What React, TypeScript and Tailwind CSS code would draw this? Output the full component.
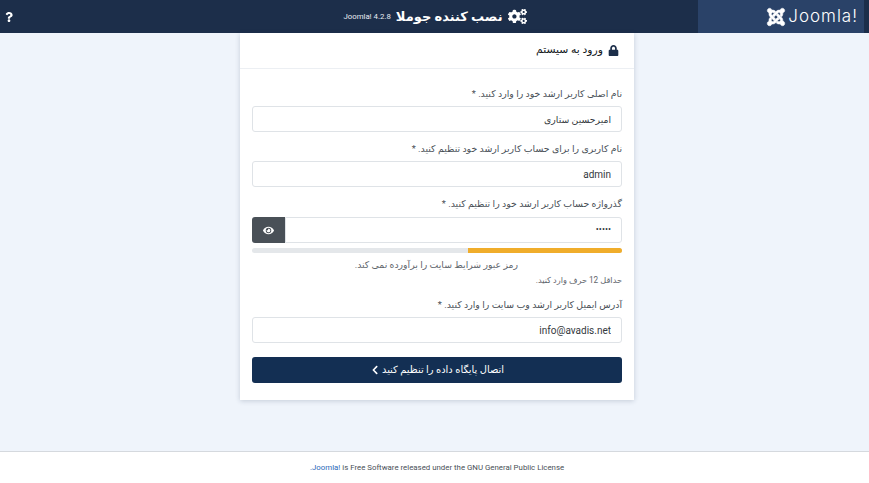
import React from "react";
import { FaLock, FaEye, FaChevronLeft, FaCogs, FaQuestion, FaJoomla } from "react-icons/fa";

const fa = "font-['Roboto','DejaVu_Sans',sans-serif]";

function Field({ label, value, size }: { label: string; value: string; size: string }) {
  return (
    <div className="flex flex-col">
      <label className="h-[29px] pt-[9px] text-[9.4px] leading-[16px] text-[#495057]">{label}</label>
      <input
        readOnly
        value={value}
        dir="rtl"
        className={`h-[26px] w-full rounded-[3px] border border-[#dfe3e7] bg-white px-[10px] text-[#33383d] outline-none ${size} ${fa}`}
      />
    </div>
  );
}

export default function App() {
  return (
    <div dir="rtl" className={`flex h-[483px] w-[869px] flex-col overflow-hidden bg-[#eff4fb] ${fa}`}>
      <header className="flex h-[33px] shrink-0 items-center bg-[#1c2e4a]">
        <div className="mr-[5px] flex h-[33px] w-[166px] shrink-0 items-center justify-end gap-[2px] bg-[#2a4268] pr-[6px]" dir="ltr">
          <FaJoomla className="text-[20px] text-white" stroke="white" strokeWidth={12} />
          <span className="font-['Inter',sans-serif] text-[17px] font-light leading-none tracking-[1px] text-white">Joomla!</span>
        </div>
        <div className="flex flex-1 items-center justify-center gap-[5px] pl-[154px]">
          <FaCogs className="text-[19px] text-white" />
          <span className="text-[13px] font-bold leading-none text-white">نصب کننده جوملا</span>
          <span className="text-[7.8px] text-[#e8ecf2]" dir="ltr">Joomla! 4.2.8</span>
        </div>
        <div className="flex w-[18px] shrink-0 items-center justify-center">
          <FaQuestion className="text-[10px] text-white" />
        </div>
      </header>

      <main className="flex min-h-0 flex-1 justify-center pl-[5px]">
        <div className="flex h-[367px] w-[394px] flex-col bg-white shadow-[0_1px_5px_rgba(30,50,80,0.2)]">
          <div className="flex h-[36px] shrink-0 items-center gap-[5px] border-b border-[#eceff3] px-[15px]">
            <FaLock className="text-[11px] text-[#1c2e4a]" />
            <h2 className="text-[10.8px] font-normal text-[#14181c]">ورود به سیستم</h2>
          </div>
          <div className="flex flex-col px-[12px] pt-[8px]">
            <Field label="نام اصلی کاربر ارشد خود را وارد کنید. *" value="امیرحسین ستاری" size="text-[9.3px]" />
            <Field label="نام کاربری را برای حساب کاربر ارشد خود تنظیم کنید. *" value="admin" size="text-[10px]" />
            <div className="flex flex-col">
              <label className="h-[30px] pt-[9px] text-[9.4px] leading-[16px] text-[#495057]">گذرواژه حساب کاربر ارشد خود را تنظیم کنید. *</label>
              <div className="flex h-[26px]">
                <input
                  readOnly
                  value="12345"
                  type="password"
                  dir="rtl"
                  className="min-w-0 flex-1 rounded-r-[3px] border border-[#dfe3e7] bg-white px-[10px] text-[9px] text-[#33383d] outline-none"
                />
                <button className="flex w-[33px] items-center justify-center rounded-l-[3px] bg-[#495057] text-white">
                  <FaEye className="text-[11px]" />
                </button>
              </div>
            </div>
            <div className="mt-[5px] flex h-[5px] overflow-hidden rounded-full bg-[#e4e7ea]">
              <div className="h-full w-[154px] bg-[#f0ad2b]" />
            </div>
            <p className="mt-[4px] pr-[104px] text-[9.3px] leading-[16px] text-[#5f666d]">رمز عبور شرایط سایت را برآورده نمی کند.</p>
            <p className="text-[8.2px] leading-[14px] text-[#5f666d]">حداقل 12 حرف وارد کنید.</p>
            <div className="mt-[1px]">
              <Field label="آدرس ایمیل کاربر ارشد وب سایت را وارد کنید. *" value="info@avadis.net" size="text-[10px]" />
            </div>
            <button className="mt-[14px] flex h-[26px] items-center justify-center gap-[2px] rounded-[3px] bg-[#132f53] text-[9.9px] font-medium text-white">
              <span>اتصال پایگاه داده را تنظیم کنید</span>
              <FaChevronLeft className="text-[10px]" />
            </button>
          </div>
        </div>
      </main>

      <footer className="flex h-[32px] shrink-0 items-center justify-center border-t border-[#d5d9de] bg-white pl-[5px] text-[7.85px] text-[#495057]" dir="ltr">
        <span>
          <a className="text-[#2a69b8]">.Joomla!</a> is Free Software released under the GNU General Public License
        </span>
      </footer>
    </div>
  );
}
